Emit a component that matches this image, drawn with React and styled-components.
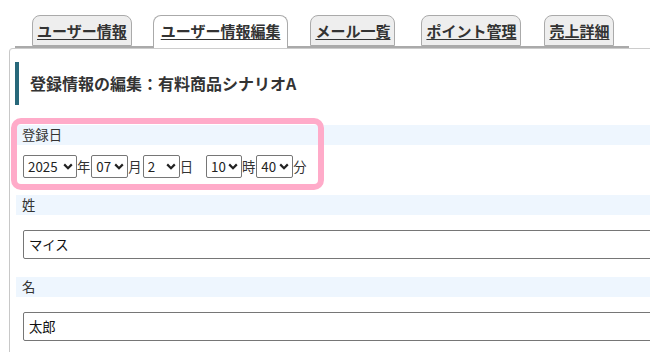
import React from 'react'
import styled, { createGlobalStyle } from 'styled-components'

const GlobalStyle = createGlobalStyle`
  html, body {
    margin: 0;
    padding: 0;
    background: #fff;
    overflow: hidden;
  }
  body {
    font-family: "Noto Sans CJK JP", "Noto Sans", sans-serif;
    color: #333;
  }
`

const Page = styled.div`
  position: relative;
  width: 720px;
`

const TabBar = styled.ul`
  display: flex;
  align-items: flex-end;
  list-style: none;
  margin: 0 0 0 15px;
  padding: 15px 0 0 17px;
  width: 597px;
  border-bottom: 2px solid #aaa;
`

const Tab = styled.li`
  position: relative;
  box-sizing: border-box;
  height: ${(p) => (p.$active ? '33px' : '31px')};
  margin: 0 ${(p) => p.$gap}px ${(p) => (p.$active ? '-2px' : '0')} 0;
  padding: 0 ${(p) => (p.$active ? '7px' : '4px')};
  border: 1px solid #aaa;
  border-bottom: ${(p) => (p.$active ? 'none' : '1px solid #aaa')};
  border-radius: 8px 8px 0 0;
  background: ${(p) => (p.$active ? '#fff' : '#eee')};
  font-size: 15px;
  font-weight: bold;
  line-height: 30px;
  white-space: nowrap;
  z-index: ${(p) => (p.$active ? 1 : 0)};

  a {
    color: #333;
    text-decoration: underline;
    text-underline-offset: 2px;
  }
`

const Panel = styled.div`
  margin-left: 9px;
  border-top: 1px solid #ccc;
  border-left: 1px solid #c8c8c8;
  border-top-left-radius: 4px;
  padding: 13px 0 20px 5px;
`

const Heading = styled.h2`
  margin: 0;
  height: 43px;
  line-height: 43px;
  border-left: 4px solid #27687a;
  padding-left: 11px;
  font-size: 16px;
  font-weight: bold;
  color: #333;
`

const Field = styled.div`
  margin: ${(p) => p.$top}px 0 0 1px;
`

const FieldLabel = styled.div`
  height: 20px;
  line-height: 20px;
  padding-left: 6px;
  background: #eef6fe;
  font-size: 13.33px;
  color: #333;
`

const DateRow = styled.div`
  display: flex;
  align-items: center;
  box-sizing: border-box;
  height: 33px;
  padding: 10px 0 0 7px;
  font-size: 13.33px;
  line-height: 23px;
`

const SelectWrap = styled.span`
  position: relative;
  display: block;
  width: ${(p) => p.$w}px;
  height: 23px;

  svg {
    position: absolute;
    right: 4px;
    top: 8px;
    pointer-events: none;
  }
`

const Select = styled.select`
  display: block;
  appearance: none;
  width: 100%;
  height: 100%;
  box-sizing: border-box;
  margin: 0;
  padding: 0 0 0 4px;
  border: 1px solid #767676;
  border-radius: 2px;
  background: #fff;
  font-family: inherit;
  font-size: 13.33px;
  color: #222;
`

const Unit = styled.span`
  margin-right: ${(p) => p.$gap || 1}px;
  color: #333;
`

const TextInput = styled.input`
  display: block;
  box-sizing: border-box;
  width: 700px;
  height: 29px;
  margin: 15px 0 0 7px;
  padding: 0 5px;
  border: 1px solid #767676;
  border-radius: 2px;
  font-family: inherit;
  font-size: 13.33px;
  color: #111;
`

const Highlight = styled.div`
  position: absolute;
  left: 11px;
  top: 118px;
  width: 313px;
  height: 72px;
  box-sizing: border-box;
  border: 6px solid #ffabc9;
  border-radius: 10px;
  pointer-events: none;
`

const Chevron = () => (
  <svg width="10" height="7" viewBox="0 0 10 7">
    <path d="M1.2 1.4 L5 5.2 L8.8 1.4" fill="none" stroke="#222" strokeWidth="2.2" />
  </svg>
)

const DateSelect = ({ w, value, options }) => (
  <SelectWrap $w={w}>
    <Select defaultValue={value}>
      {options.map((o) => (
        <option key={o} value={o}>{o}</option>
      ))}
    </Select>
    <Chevron />
  </SelectWrap>
)

const tabs = [
  { label: 'ユーザー情報', gap: 21 },
  { label: 'ユーザー情報編集', gap: 22 },
  { label: 'メール一覧', gap: 26 },
  { label: 'ポイント管理', gap: 23 },
  { label: '売上詳細', gap: 0 },
]

const range = (a, b, pad) =>
  Array.from({ length: b - a + 1 }, (_, i) => {
    const n = String(a + i)
    return pad ? n.padStart(2, '0') : n
  })

export default function App() {
  return (
    <Page>
      <GlobalStyle />
      <TabBar>
        {tabs.map((t, i) => (
          <Tab key={t.label} $active={i === 1} $gap={t.gap}>
            <a href="#">{t.label}</a>
          </Tab>
        ))}
      </TabBar>
      <Panel>
        <Heading>登録情報の編集：有料商品シナリオA</Heading>
        <Field $top={20}>
          <FieldLabel>登録日</FieldLabel>
          <DateRow>
            <DateSelect w={54} value="2025" options={range(2020, 2030)} />
            <Unit>年</Unit>
            <DateSelect w={37} value="07" options={range(1, 12, true)} />
            <Unit>月</Unit>
            <DateSelect w={37} value="2" options={range(1, 31)} />
            <Unit $gap={13}>日</Unit>
            <DateSelect w={36} value="10" options={range(0, 23)} />
            <Unit>時</Unit>
            <DateSelect w={37} value="40" options={range(0, 59)} />
            <Unit>分</Unit>
          </DateRow>
        </Field>
        <Field $top={17}>
          <FieldLabel>姓</FieldLabel>
          <TextInput defaultValue="マイス" />
        </Field>
        <Field $top={18}>
          <FieldLabel>名</FieldLabel>
          <TextInput defaultValue="太郎" />
        </Field>
      </Panel>
      <Highlight />
    </Page>
  )
}
